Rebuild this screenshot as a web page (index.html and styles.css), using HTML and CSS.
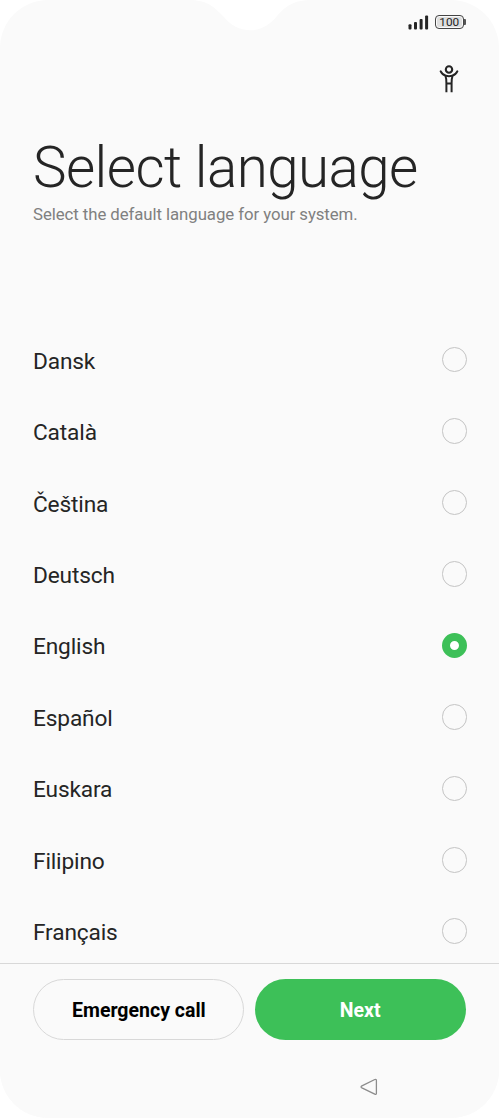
FILE: index.html
```html
<!DOCTYPE html>
<html lang="en">
<head>
<meta charset="utf-8">
<title>Select language</title>
<link rel="stylesheet" href="styles.css">
</head>
<body>
<div class="phone">
  <svg class="notch" width="116" height="31" viewBox="0 0 116 31"><path d="M0 0C17 1 23 8 31 16C46 35 70 35 85 16C92 8 99 1 116 0Z" fill="#fff"/></svg>
  <header class="status">
    <svg class="signal" width="21" height="15" viewBox="0 0 21 15" fill="#252525"><rect x=".5" y="9.3" width="3" height="5.2" rx="1"/><rect x="6" y="7" width="3" height="7.5" rx="1"/><rect x="11.6" y="4" width="3" height="10.5" rx="1"/><rect x="17.1" y=".5" width="3" height="14" rx="1"/></svg>
    <div class="battery">100</div>
  </header>
  <div class="tools">
    <svg width="20" height="28" viewBox="0 0 20 28" fill="none" stroke="#252525" stroke-width="2.1" stroke-linecap="round" stroke-linejoin="round"><circle cx="10" cy="4.5" r="3.2"/><path d="M1.7 6.4C3 9 4.6 10.2 6.8 10.8Q10 11.7 13.2 10.8C15.4 10.2 17 9 18.3 6.4"/><path d="M6.5 11C7.6 14 7.5 16 7.4 18.2V27.2M13.5 11C12.4 14 12.5 16 12.6 18.2V27.2M7.4 18.6H12.6" stroke-width="2" stroke-linecap="butt"/></svg>
  </div>
  <main>
    <h1>Select language</h1>
    <p class="subtitle">Select the default language for your system.</p>
    <ul class="languages">
      <li><span>Dansk</span><i class="radio"></i></li>
      <li><span>Català</span><i class="radio"></i></li>
      <li><span>Čeština</span><i class="radio"></i></li>
      <li><span>Deutsch</span><i class="radio"></i></li>
      <li><span>English</span><i class="radio checked"></i></li>
      <li><span>Español</span><i class="radio"></i></li>
      <li><span>Euskara</span><i class="radio"></i></li>
      <li><span>Filipino</span><i class="radio"></i></li>
      <li><span>Français</span><i class="radio"></i></li>
    </ul>
  </main>
  <footer>
    <div class="actions">
      <button class="emergency">Emergency call</button>
      <button class="next">Next</button>
    </div>
    <nav>
      <svg width="18" height="18" viewBox="0 0 18 18" fill="none" stroke="#8c8c8c" stroke-width="1.3" stroke-linejoin="round"><path d="M14.8 1.5Q16.4 1 16.4 2.5V15.3Q16.4 16.8 14.8 16.2L1.9 9.9Q.2 8.9 1.9 7.9Z"/></svg>
    </nav>
  </footer>
</div>
</body>
</html>
```
FILE: styles.css
```css
* { box-sizing: border-box; }
body { margin: 0; background: #fff; font-family: Roboto, "Noto Sans", sans-serif; color: #252525; }
.phone {
  position: relative;
  width: 499px;
  height: 1118px;
  display: flex;
  flex-direction: column;
  overflow: hidden;
  background: #fafafa;
  border-radius: 48px;
}
.notch { position: absolute; left: 192px; top: 0; }
.status {
  display: flex;
  flex-shrink: 0;
  justify-content: flex-end;
  align-items: flex-start;
  height: 60px;
  padding: 15px 35px 0 0;
  gap: 6px;
}
.battery {
  position: relative;
  width: 29.5px;
  height: 14px;
  border: 1px solid #444;
  border-radius: 4px;
  background: #dedede;
  box-shadow: inset 0 0 0 1px #fafafa;
  font-size: 11.8px;
  line-height: 13px;
  text-align: center;
}
.battery::after {
  content: "";
  position: absolute;
  right: -3px;
  top: 3px;
  width: 2px;
  height: 6px;
  border-radius: 0 1px 1px 0;
  background: #555;
}
.tools { display: flex; flex-shrink: 0; justify-content: flex-end; height: 74px; padding: 5px 40px 0 0; }
main { flex: 1; min-height: 0; overflow: hidden; }
h1 { margin: 0 0 0 33px; font-size: 56.5px; font-weight: 300; line-height: 68px; letter-spacing: -.55px; white-space: nowrap; }
.subtitle { margin: 1px 0 0 33px; font-size: 16.8px; line-height: 22px; letter-spacing: -.07px; color: #808080; white-space: nowrap; }
.languages { margin: 99px 0 0; padding: 0 32px 0 33px; list-style: none; }
.languages li { display: flex; justify-content: space-between; align-items: center; height: 71.45px; font-size: 22.7px; letter-spacing: -.15px; }
.languages span { padding-top: 3px; }
.radio { width: 25.5px; height: 25.5px; border: 1.5px solid #c4c4c4; border-radius: 50%; }
.checked { border: 9px solid #3dc058; background: radial-gradient(circle, #fff 4.5px, #3dc058 5px); border-width: 8px; }
footer { flex-shrink: 0; height: 155px; border-top: 1px solid #d8d8d8; background: #fafafa; }
.actions { display: grid; grid-template-columns: 1fr 1fr; gap: 11px; padding: 15px 33.5px 0 33px; }
button { height: 61px; padding: 0; border: 0; border-radius: 31px; font: 700 19.5px/63px Roboto, sans-serif; }
.emergency { border: 1.5px solid #d8d8d8; background: #fafafa; color: #000; line-height: 61px; padding-left: 1px; }
.next { background: #3dc058; color: #fff; }
nav { display: flex; justify-content: flex-end; padding: 38px 121px 0 0; }
```
